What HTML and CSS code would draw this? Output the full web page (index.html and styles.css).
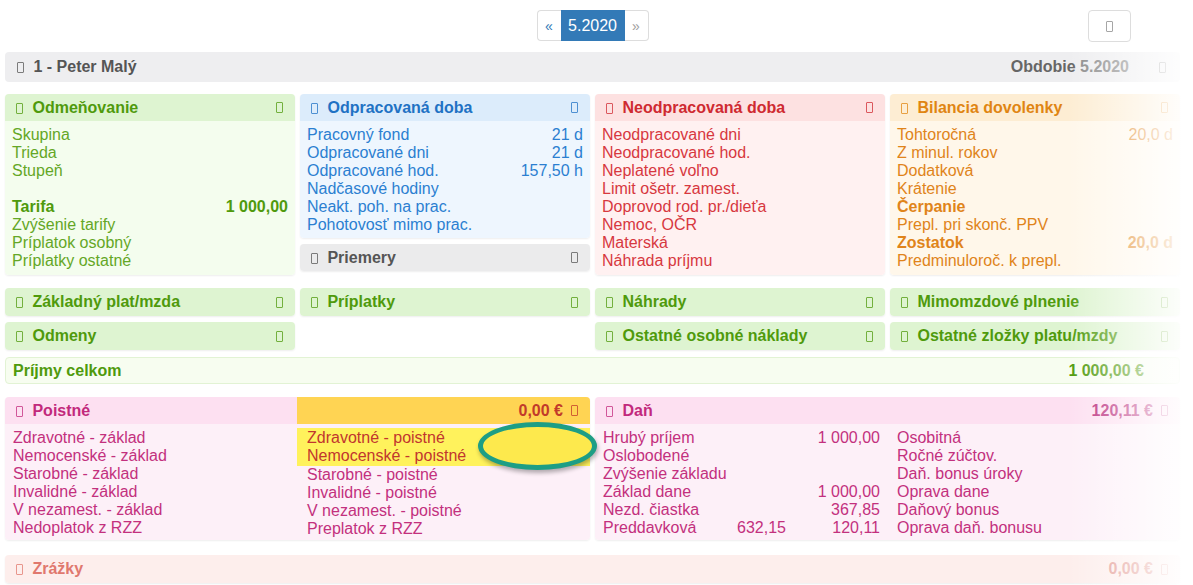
FILE: index.html
```html
<!DOCTYPE html>
<html lang="sk">
<head>
<meta charset="utf-8">
<title>Mzdy</title>
<link rel="stylesheet" href="styles.css">
</head>
<body>
<div class="page">
  <div class="topbar">
    <div></div>
    <div class="pager">
      <span class="pg prev">«</span><span class="pg active">5.2020</span><span class="pg next">»</span>
    </div>
    <div class="tools"><span class="tool-btn"><i class="ico"></i></span></div>
  </div>

  <div class="person">
    <span class="ptitle"><i class="ico"></i> 1 - Peter Malý</span>
    <span class="period">Obdobie <span class="pval">5.2020</span></span>
    <i class="ico pico"></i>
  </div>

  <div class="grid row1">
    <div class="card green">
      <div class="hd"><span><i class="ico"></i> Odmeňovanie</span><i class="ico"></i></div>
      <div class="bd">
        <div class="ln">Skupina</div>
        <div class="ln">Trieda</div>
        <div class="ln">Stupeň</div>
        <div class="ln">&nbsp;</div>
        <div class="ln b"><span>Tarifa</span><span>1 000,00</span></div>
        <div class="ln">Zvýšenie tarify</div>
        <div class="ln">Príplatok osobný</div>
        <div class="ln">Príplatky ostatné</div>
      </div>
    </div>
    <div class="stack">
      <div class="card blue">
        <div class="hd"><span><i class="ico"></i> Odpracovaná doba</span><i class="ico"></i></div>
        <div class="bd">
          <div class="ln"><span>Pracovný fond</span><span>21 d</span></div>
          <div class="ln"><span>Odpracované dni</span><span>21 d</span></div>
          <div class="ln"><span>Odpracované hod.</span><span>157,50 h</span></div>
          <div class="ln">Nadčasové hodiny</div>
          <div class="ln">Neakt. poh. na prac.</div>
          <div class="ln">Pohotovosť mimo prac.</div>
        </div>
      </div>
      <div class="card gray">
        <div class="hd"><span><i class="ico"></i> Priemery</span><i class="ico"></i></div>
      </div>
    </div>
    <div class="card red">
      <div class="hd"><span><i class="ico"></i> Neodpracovaná doba</span><i class="ico"></i></div>
      <div class="bd">
        <div class="ln">Neodpracované dni</div>
        <div class="ln">Neodpracované hod.</div>
        <div class="ln">Neplatené voľno</div>
        <div class="ln">Limit ošetr. zamest.</div>
        <div class="ln">Doprovod rod. pr./dieťa</div>
        <div class="ln">Nemoc, OČR</div>
        <div class="ln">Materská</div>
        <div class="ln">Náhrada príjmu</div>
      </div>
    </div>
    <div class="card orange">
      <div class="hd"><span><i class="ico"></i> Bilancia dovolenky</span><i class="ico"></i></div>
      <div class="bd">
        <div class="ln"><span>Tohtoročná</span><span>20,0 d</span></div>
        <div class="ln">Z minul. rokov</div>
        <div class="ln">Dodatková</div>
        <div class="ln">Krátenie</div>
        <div class="ln b">Čerpanie</div>
        <div class="ln">Prepl. pri skonč. PPV</div>
        <div class="ln b"><span>Zostatok</span><span>20,0 d</span></div>
        <div class="ln">Predminuloroč. k prepl.</div>
      </div>
    </div>
  </div>

  <div class="grid rows23">
    <div class="card green mini"><div class="hd"><span><i class="ico"></i> Základný plat/mzda</span><i class="ico"></i></div></div>
    <div class="card green mini"><div class="hd"><span><i class="ico"></i> Príplatky</span><i class="ico"></i></div></div>
    <div class="card green mini"><div class="hd"><span><i class="ico"></i> Náhrady</span><i class="ico"></i></div></div>
    <div class="card green mini"><div class="hd"><span><i class="ico"></i> Mimomzdové plnenie</span><i class="ico"></i></div></div>
    <div class="card green mini"><div class="hd"><span><i class="ico"></i> Odmeny</span><i class="ico"></i></div></div>
    <div></div>
    <div class="card green mini"><div class="hd"><span><i class="ico"></i> Ostatné osobné náklady</span><i class="ico"></i></div></div>
    <div class="card green mini"><div class="hd"><span><i class="ico"></i> Ostatné zložky platu/mzdy</span><i class="ico"></i></div></div>
  </div>

  <div class="total">
    <span>Príjmy celkom</span><span>1 000,00 €</span>
  </div>

  <div class="grid2">
    <div class="card pink">
      <div class="hd split">
        <span class="hl"><span><i class="ico"></i> Poistné</span></span>
        <span class="hr"><span class="amt">0,00 €</span><i class="ico"></i></span>
      </div>
      <div class="bd cols2">
        <div class="colL">
          <div class="ln">Zdravotné - základ</div>
          <div class="ln">Nemocenské - základ</div>
          <div class="ln">Starobné - základ</div>
          <div class="ln">Invalidné - základ</div>
          <div class="ln">V nezamest. - základ</div>
          <div class="ln">Nedoplatok z RZZ</div>
        </div>
        <div class="colR">
          <div class="mark">
            <div class="ln">Zdravotné - poistné</div>
            <div class="ln">Nemocenské - poistné</div>
          </div>
          <div class="ln">Starobné - poistné</div>
          <div class="ln">Invalidné - poistné</div>
          <div class="ln">V nezamest. - poistné</div>
          <div class="ln">Preplatok z RZZ</div>
        </div>
      </div>
    </div>
    <div class="card pink">
      <div class="hd"><span><i class="ico"></i> Daň</span><span class="hright"><span class="amt">120,11 €</span><i class="ico"></i></span></div>
      <div class="bd tax">
        <span>Hrubý príjem</span><span></span><span class="r">1 000,00</span><span class="t">Osobitná</span>
        <span>Oslobodené</span><span></span><span></span><span class="t">Ročné zúčtov.</span>
        <span>Zvýšenie základu</span><span></span><span></span><span class="t">Daň. bonus úroky</span>
        <span>Základ dane</span><span></span><span class="r">1 000,00</span><span class="t">Oprava dane</span>
        <span>Nezd. čiastka</span><span></span><span class="r">367,85</span><span class="t">Daňový bonus</span>
        <span>Preddavková</span><span class="r">632,15</span><span class="r">120,11</span><span class="t">Oprava daň. bonusu</span>
      </div>
    </div>
  </div>

  <div class="card salmon mini deduct">
    <div class="hd"><span><i class="ico"></i> Zrážky</span><span class="hright"><span class="amt">0,00 €</span><i class="ico"></i></span></div>
  </div>

  <div class="ring"></div>
  <div class="fade"></div>
</div>
</body>
</html>
```
FILE: styles.css
```css
* { box-sizing: border-box; }
html, body { margin: 0; padding: 0; background: #fff; }
body {
  font-family: "Liberation Sans", Arial, sans-serif;
  font-size: 16px;
  color: #333;
}
.page {
  position: relative;
  width: 1193px;
  height: 585px;
  overflow: hidden;
  padding: 10px 13px 0 5px;
}
.ico {
  display: inline-block;
  width: 7px;
  height: 11px;
  border: 1px solid currentColor;
  border-radius: 1px;
  opacity: 0.75;
  vertical-align: -1px;
}
.hd span > .ico:first-child,
.ptitle > .ico { margin-right: 5px; }

/* top bar */
.topbar {
  display: grid;
  grid-template-columns: 1fr auto 1fr;
  align-items: start;
  height: 32px;
}
.pager { display: flex; height: 31px; }
.pg {
  display: flex;
  align-items: center;
  justify-content: center;
  border: 1px solid #ddd;
  height: 31px;
  font-size: 15px;
}
.pg.prev { width: 24px; color: #337ab7; border-radius: 4px 0 0 4px; border-right: none; font-size: 14px; }
.pg.active { width: 64px; background: #337ab7; border-color: #337ab7; color: #fff; font-size: 16px; }
.pg.next { width: 24px; color: #a0a0a0; border-radius: 0 4px 4px 0; border-left: none; font-size: 14px; }
.tools { display: flex; justify-content: flex-end; padding-right: 49px; }
.tool-btn {
  display: flex;
  align-items: center;
  justify-content: center;
  width: 43px;
  height: 32px;
  border: 1px solid #ddd;
  border-radius: 4px;
  color: #888;
}

/* person bar */
.person {
  margin-top: 10px;
  height: 30px;
  background: #eeeef0;
  border-radius: 4px;
  display: flex;
  align-items: center;
  padding: 0 14px 0 12px;
  font-weight: bold;
  color: #555;
}
.ptitle { flex: 1; }
.period { color: #666; }
.pval { color: #888; }
.pico { margin-left: 30px; color: #777; }

/* grids */
.grid {
  display: grid;
  grid-template-columns: repeat(4, 290px);
  column-gap: 5px;
  align-items: start;
}
.row1 { margin-top: 12px; }
.stack { display: flex; flex-direction: column; gap: 6px; }
.rows23 { margin-top: 13px; row-gap: 6px; }

.card {
  border-radius: 4px;
  overflow: hidden;
  box-shadow: 0 1px 2px rgba(0,0,0,0.07);
}
.hd {
  height: 27px;
  line-height: 27px;
  display: flex;
  justify-content: space-between;
  align-items: center;
  padding: 0 12px 0 11px;
  font-weight: bold;
}
.mini .hd { height: 28px; line-height: 28px; }
.bd { padding: 5px 7px 5px 7px; }
.ln {
  line-height: 18px;
  height: 18px;
  display: flex;
  justify-content: space-between;
  white-space: nowrap;
}
.ln.b { font-weight: bold; }

.green .hd { background: #def4d1; color: #4f9a0c; }
.green .bd { background: #f4fdee; color: #64a726; }
.green .ln.b { color: #4f9a0c; }
.blue .hd { background: #dcecfb; color: #1f72c4; }
.blue .bd { background: #eef6fe; color: #2b7fd1; padding-bottom: 4px; }
.gray .hd { background: #ebebec; color: #555; }
.red .hd { background: #fde1e1; color: #cf2a31; }
.red .bd { background: #fff1f1; color: #d7383f; }
.orange .hd { background: #fdedd3; color: #e08512; }
.orange .bd { background: #fff7ea; color: #e0841a; }

.total {
  margin-top: 7px;
  height: 27px;
  width: 1175px;
  border: 1px solid #e2f3d4;
  background: #f7fdf0;
  border-radius: 4px;
  display: flex;
  justify-content: space-between;
  align-items: center;
  padding: 0 35px 0 7px;
  font-weight: bold;
  color: #4f9a0c;
}

.grid2 {
  margin-top: 13px;
  display: grid;
  grid-template-columns: 585px 585px;
  column-gap: 5px;
  align-items: stretch;
}
.pink .hd { background: #fde0f1; color: #c2297c; }
.pink .bd { background: #fdf0f8; color: #c3307e; }
.hd.split { padding: 0; }
.hd.split .hl { flex: 0 0 292px; padding-left: 11px; }
.hd.split .hr {
  flex: 1;
  background: #ffd453;
  color: #c23a2a;
  text-align: right;
  padding-right: 12px;
  height: 27px;
  display: flex;
  align-items: center;
  justify-content: flex-end;
  gap: 8px;
}
.hright { display: flex; align-items: center; gap: 8px; }
.pink .hright { color: #b8287a; }
.cols2 {
  display: grid;
  grid-template-columns: 292px 1fr;
  padding: 4px 0 2px 0;
}
.colL { padding: 1px 0 0 8px; }
.colR .ln { padding-left: 10px; }
.mark { background: #fff25c; padding: 1px 0; color: #c1362e; }

.tax {
  display: grid;
  grid-template-columns: 125px 58px 94px 1fr;
  grid-auto-rows: 18px;
  line-height: 18px;
  padding: 5px 8px 3px 8px;
  white-space: nowrap;
}
.tax .r { text-align: right; }
.tax .t { padding-left: 17px; }

.deduct { margin-top: 15px; width: 1175px; }
.salmon .hd { background: #fdeeec; color: #e0786e; }
.salmon .hright { color: #e39a93; }

.ring {
  position: absolute;
  left: 478px;
  top: 422px;
  width: 119px;
  height: 48px;
  border: 5px solid #1d9e85;
  border-radius: 50%;
  background: #fde94d;
  box-shadow: 1px 3px 4px rgba(0,0,0,0.3);
}
.fade {
  position: absolute;
  top: 46px;
  right: 0;
  width: 125px;
  height: 540px;
  background: linear-gradient(to right, rgba(255,255,255,0) 0%, rgba(255,255,255,0.8) 78%, #fff 100%);
  pointer-events: none;
}
```
